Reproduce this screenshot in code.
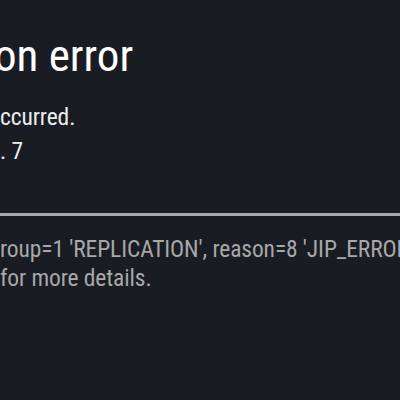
export default function App() {
  return (
    <div className="w-[400px] h-[400px] overflow-hidden bg-[#191c23] font-['Roboto',sans-serif] font-stretch-condensed">
      <div className="pt-[30px] whitespace-nowrap">
        <div className="-ml-[6px] text-[45px] leading-[52px] text-white">on error</div>
        <div className="mt-[18px] text-[23.5px] leading-[34px] tracking-[-0.1px] text-[#eeeeee]">ccurred.</div>
        <div className="text-[23.5px] leading-[34px] tracking-[-0.1px] text-[#eeeeee]">. 7</div>
        <div className="mt-[45px] h-[3px] bg-[#a9a9a9]"></div>
        <div className="mt-[19px] text-[23.5px] leading-[29px] tracking-[-0.1px] text-[#a8a8a8]">roup=1 'REPLICATION', reason=8 'JIP_ERROR'</div>
        <div className="text-[23.5px] leading-[29px] tracking-[-0.1px] text-[#a8a8a8]">for more details.</div>
      </div>
    </div>
  );
}
